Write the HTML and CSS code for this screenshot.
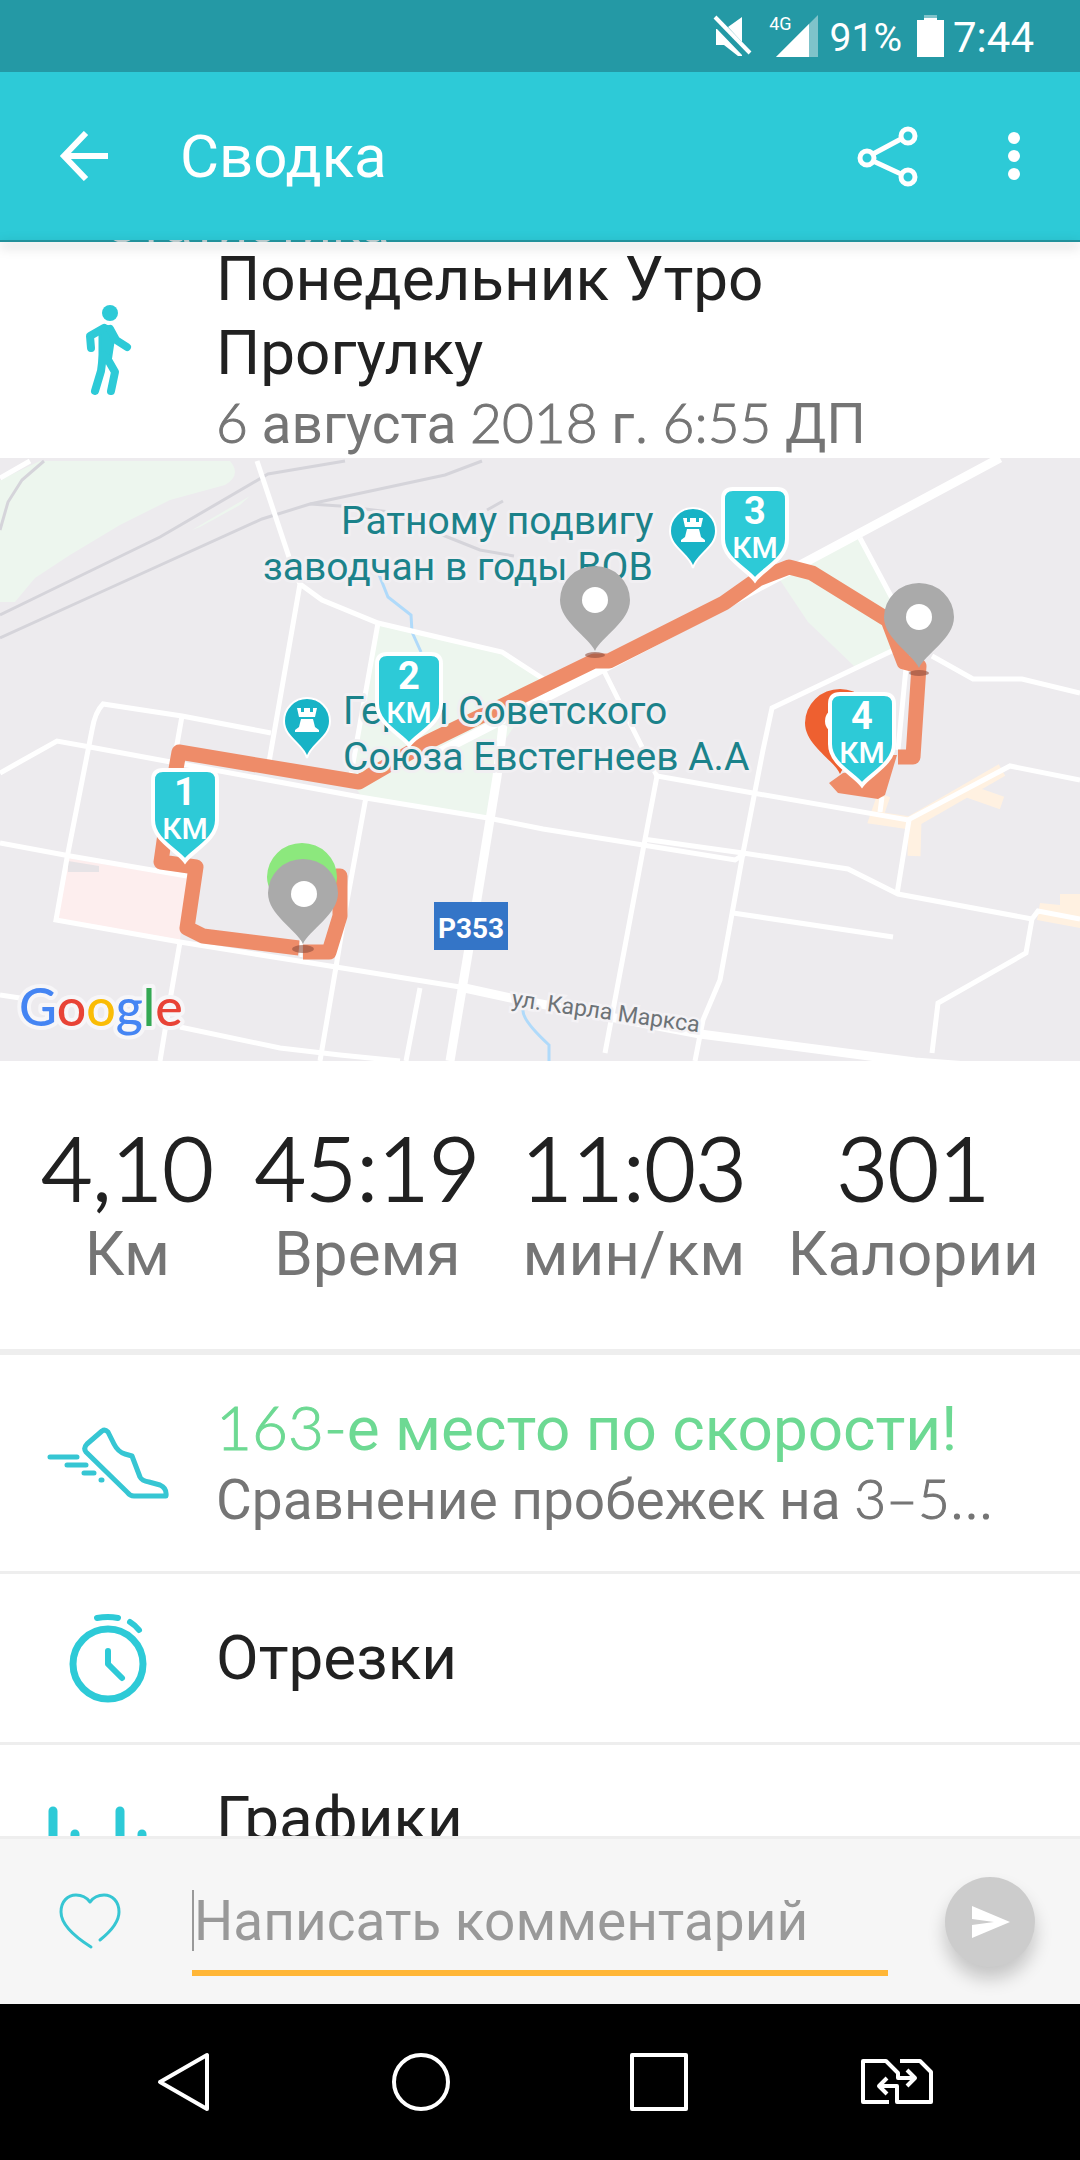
FILE: index.html
```html
<!DOCTYPE html>
<html lang="ru">
<head>
    <meta charset="UTF-8">
    <meta name="viewport" content="width=device-width, initial-scale=1.0">
    <title>Сводка</title>
    <link rel="stylesheet" href="styles.css">
</head>
<body>
    <div class="status-bar">
        <svg class="mute" width="40" height="42" viewBox="716 14 40 42">
            <path d="M719 28V44H727L741 55H745V54L720 28ZM731 26L745 16V41Z" fill="#fff"/>
            <path d="M718 16L753 52" stroke="#fff" stroke-width="4"/>
        </svg>
        <span class="network">4G</span>
        <svg class="signal" width="42" height="42" viewBox="0 0 42 42">
            <path d="M42 0V42H0Z" fill="#7fc3ca"/>
            <path d="M33 9V42H0Z" fill="#fff"/>
        </svg>
        <span class="percent">91%</span>
        <svg class="battery" width="27" height="42" viewBox="0 0 27 42">
            <path d="M7 0H20V5H7Z" fill="#7fc3ca"/>
            <path d="M0 5H7V3H20V5H27V42H0Z" fill="#fff"/>
        </svg>
        <span class="clock">7:44</span>
    </div>

    <header class="app-bar">
        <button class="icon-button" type="button" aria-label="Назад">
            <svg width="50" height="50" viewBox="59 131 50 50" fill="none" stroke="#fff" stroke-width="6">
                <path d="M108 156H65M86 133L64 156L86 179"/>
            </svg>
        </button>
        <h1>Сводка</h1>
        <button class="icon-button" type="button" aria-label="Поделиться">
            <svg width="62" height="62" viewBox="857 125 62 62" fill="none" stroke="#fff" stroke-width="5">
                <circle cx="908" cy="136" r="7"/>
                <circle cx="867" cy="158" r="7"/>
                <circle cx="908" cy="177" r="7"/>
                <path d="M873 154L901 139M873 161L901 174"/>
            </svg>
        </button>
        <button class="icon-button menu" type="button" aria-label="Меню">
            <svg width="14" height="50" viewBox="0 0 14 50" fill="#fff">
                <circle cx="7" cy="7" r="6"/>
                <circle cx="7" cy="25" r="6"/>
                <circle cx="7" cy="43" r="6"/>
            </svg>
        </button>
    </header>
    <div class="tab-edge"><span>Статистика</span></div>

    <main>
        <section class="activity">
            <div class="row-icon">
                <svg width="48" height="92" viewBox="85 304 48 92" fill="none" stroke="#2dcad7" stroke-linecap="round" stroke-linejoin="round">
                    <circle cx="111" cy="313" r="8" fill="#2dcad7" stroke="none"/>
                    <path d="M101 330L106 326L111 327L114 342L111 362H101L101 345Z" fill="#2dcad7" stroke-width="3"/>
                    <path d="M105 328L91 336L92 348" stroke-width="8"/>
                    <path d="M111 329L117 340L128 347" stroke-width="8"/>
                    <path d="M104 355L102 371L96 391M108 358L116 372L112 391" stroke-width="8"/>
                </svg>
            </div>
            <div class="row-text">
                <h2>Понедельник Утро Прогулку</h2>
                <p><span class="num">6</span> августа <span class="num">2018</span> г. <span class="num">6:55</span> ДП</p>
            </div>
        </section>

        <svg class="map" viewBox="0 458 1080 603">
            <defs>
                <path id="pin" d="M0 50C-6 36-35 21-35-1A35 34 0 0 1 35-1C35 21 6 36 0 50Z"/>
                <g id="castle">
                    <path d="M0 37C-3 23-23 17-23 0A23 23 0 0 1 23 0C23 17 3 23 0 37Z" fill="#18b3c6" stroke="#fff" stroke-width="2"/>
                    <path d="M-10-13H-6V-9H-3V-13H3V-9H6V-13H10L8-4H-8ZM-6-2H6L8 6L12 9V11H-12V9L-8 6Z" fill="#fff"/>
                </g>
                <path id="shield" d="M-22 2H22Q32 2 32 12V52C32 72 8 82 0 93C-8 82-32 72-32 52V12Q-32 2-22 2Z"/>
            </defs>

            <!-- parks and blocks -->
            <g fill="#edf6ee">
                <path d="M0 480L40 461H230Q242 475 225 485L170 500L120 525L70 555L35 578L15 602H0Z"/>
                <path d="M192 530L250 496L240 505L200 527Z"/>
                <path d="M378 625L502 652L545 680L505 740L488 817L362 797L350 780Z"/>
                <path d="M808 557L860 538L893 600L897 648L855 667L808 622L780 580Z"/>
            </g>
            <path d="M67 858L187 878L180 940L57 920Z" fill="#fdeeee"/>
            <path d="M68 861L99 866V872H68Z" fill="#e6e3e6"/>
            <path d="M1037 920L1040 903L1060 905V894H1080V928Z" fill="#fff1e1"/>
            <path d="M884 795L876 818L910 823L1002 770M965 790L1002 803M915 820L914 856" fill="none" stroke="#fff1e1" stroke-width="13"/>

            <!-- railways -->
            <g fill="none" stroke="#d5d4da" stroke-width="3">
                <path d="M0 615L45 593L160 537L268 474L345 461"/>
                <path d="M0 638L90 597L262 519L310 504L445 475L482 461"/>
                <path d="M44 461L22 480L8 502L0 530"/>
                <path d="M310 504L340 506L390 512L430 530L480 550L514 556M487 510L503 501"/>
            </g>
            <path d="M378 572L388 597L411 615L412 632L421 652M523 1010Q522 1020 549 1045V1061" fill="none" stroke="#b0dafa" stroke-width="3"/>

            <!-- streets -->
            <g fill="none" stroke="#fff" stroke-width="5">
                <path d="M0 478L30 461M257 461L290 560L300 584L268 768"/>
                <path d="M300 584L322 600L378 623L450 640L502 652L545 680M378 623L350 780"/>
                <path d="M0 773L57 741L90 747L160 760L360 797L488 818L543 829L643 845L735 860L746 853"/>
                <path d="M271 733L182 716L103 704Q95 712 92 730L67 858L56 920L180 942L336 967L460 987"/>
                <path d="M182 716L176 750M0 843L70 856L187 876"/>
                <path d="M366 797L345 912L336 967L320 1061M180 942L170 1000L160 1061"/>
                <path d="M0 995L20 998M180 1027L280 1048L340 1055L400 1061M420 988L406 1061"/>
                <path d="M604 671L642 747L657 776L753 793L908 820L1010 766L1080 780"/>
                <path d="M898 648L772 708L763 750L743 853L720 980L703 1020L695 1061"/>
                <path d="M657 776L643 850L605 1053M643 839L743 853L848 869L898 894L1032 919"/>
                <path d="M733 913L893 937M909 820L897 894M882 797L880 812"/>
                <path d="M1080 919L1038 911L1032 919L1026 953L938 1003L932 1053"/>
                <path d="M860 538L893 600M932 656L973 679L1022 679L1080 693M906 668L898 750"/>
            </g>
            <g fill="none" stroke="#fff" stroke-width="9">
                <path d="M503 725L497 777L470 942L450 1061"/>
                <path d="M460 987L520 1000L700 1034L915 1062L1020 1070"/>
                <path d="M1000 458L860 533L757 588L604 668L420 762"/>
            </g>

            <!-- track -->
            <g fill="none" stroke="#ee8c69" stroke-width="15" stroke-linejoin="round">
                <path d="M336 876H340V916L329 952H303"/>
                <path d="M299 948L203 936L187 928L196 867L161 862L167 820L179 752L359 782L428 742L594 661L609 661L724 603L758 579L789 567L812 573L888 620L904 662L919 666L913 757H898"/>
            </g>
            <path d="M829 783L843 773L862 770L888 755H897L885 795L878 799L838 793Z" fill="#ee8c69"/>
            <path d="M301 940V957" stroke="#fff" stroke-width="3"/>

            <!-- place names -->
            <g class="place">
                <text x="341" y="534">Ратному подвигу</text>
                <text x="263" y="580">заводчан в годы ВОВ</text>
                <text x="343" y="724">Герои Советского</text>
                <text x="343" y="770">Союза Евстегнеев А.А</text>
            </g>
            <use href="#castle" x="693" y="531"/>
            <use href="#castle" x="307" y="721"/>
            <text class="street" transform="translate(511 1006) rotate(8)">ул. Карла Маркса</text>
            <rect x="434" y="902" width="74" height="48" fill="#3475c7"/>
            <text class="road" x="471" y="938">P353</text>

            <!-- start, finish and pauses -->
            <g fill="#8f4d3c" opacity="0.6">
                <ellipse cx="595" cy="655" rx="10" ry="3"/>
                <ellipse cx="919" cy="673" rx="10" ry="3"/>
                <ellipse cx="303" cy="949" rx="11" ry="4"/>
            </g>
            <use href="#pin" x="302" y="878" fill="#8ce87d"/>
            <use href="#pin" x="840" y="724" fill="#ee6030"/>
            <circle cx="838" cy="721" r="13" fill="#fff"/>
            <g fill="#aaa">
                <use href="#pin" x="595" y="601"/>
                <use href="#pin" x="919" y="618"/>
                <use href="#pin" x="303" y="894"/>
            </g>
            <g fill="#fff">
                <circle cx="595" cy="600" r="13"/>
                <circle cx="919" cy="617" r="13"/>
                <circle cx="304" cy="894" r="13"/>
            </g>

            <!-- kilometre marks -->
            <g class="km">
                <g transform="translate(185 768)"><use href="#shield"/><text y="37">1</text><text class="unit" y="71">КМ</text></g>
                <g transform="translate(409 652)"><use href="#shield"/><text y="37">2</text><text class="unit" y="71">КМ</text></g>
                <g transform="translate(755 487)"><use href="#shield"/><text y="37">3</text><text class="unit" y="71">КМ</text></g>
                <g transform="translate(862 692)"><use href="#shield"/><text y="37">4</text><text class="unit" y="71">КМ</text></g>
            </g>

            <text class="google" x="19" y="1026"><tspan fill="#4585f3">G</tspan><tspan fill="#e84336">o</tspan><tspan fill="#fabc05">o</tspan><tspan fill="#4585f3">g</tspan><tspan fill="#34a853">l</tspan><tspan fill="#e84336">e</tspan></text>
        </svg>

        <section class="stats">
            <div class="stat"><span class="value">4,10</span><span class="label">Км</span></div>
            <div class="stat"><span class="value">45:19</span><span class="label">Время</span></div>
            <div class="stat"><span class="value">11:03</span><span class="label">мин/км</span></div>
            <div class="stat"><span class="value">301</span><span class="label">Калории</span></div>
        </section>

        <section class="row">
            <div class="row-icon">
                <svg width="124" height="74" viewBox="46 1426 124 74" fill="none" stroke="#36c6d3" stroke-width="5" stroke-linecap="round" stroke-linejoin="round">
                    <path d="M102 1431Q105 1429 108 1432L114 1444Q118 1452 125 1454L132 1456L140 1477Q142 1481 149 1482L160 1485Q167 1488 166 1496H134Q130 1496 127 1492L86 1452Q83 1448 87 1444Z"/>
                    <path d="M50 1457H77M67 1465H86M84 1473H94M101 1480H102"/>
                </svg>
            </div>
            <div class="row-text">
                <h2 class="rank"><span class="num">163-</span>е место по скорости!</h2>
                <p>Сравнение пробежек на <span class="num">3–5</span>...</p>
            </div>
        </section>

        <section class="row">
            <div class="row-icon">
                <svg width="80" height="92" viewBox="68 1612 80 92" fill="none" stroke="#2dcad7" stroke-width="7" stroke-linecap="round" stroke-linejoin="round">
                    <circle cx="108" cy="1664" r="35"/>
                    <path d="M97 1618Q108 1616 118 1618M130 1622Q135 1625 139 1630M108 1651V1664L122 1678" stroke-width="6"/>
                </svg>
            </div>
            <div class="row-text">
                <h2>Отрезки</h2>
            </div>
        </section>

        <section class="row">
            <div class="row-icon">
                <svg width="120" height="94" viewBox="0 0 120 94" fill="none" stroke="#2dcad7" stroke-width="9" stroke-linecap="round">
                    <path d="M5 5V89M27 28V89M49 50V89M72 5V89M94 28V89M115 50V89"/>
                </svg>
            </div>
            <div class="row-text">
                <h2>Графики</h2>
                <p>Темп, высота</p>
            </div>
        </section>
    </main>

    <form class="comment">
        <button class="icon-button like" type="button" aria-label="Нравится">
            <svg width="62" height="58" viewBox="59 1894 62 58" fill="none" stroke="#36c6d3" stroke-width="3" stroke-linecap="round" stroke-linejoin="round">
                <path d="M91 1948C72 1936 61 1925 61 1913C61 1902 68 1896 76 1896C82 1896 87 1899 90 1903C93 1899 98 1896 104 1896C112 1896 119 1902 119 1913C119 1924 110 1933 100 1941"/>
            </svg>
        </button>
        <div class="field">
            <input type="text" placeholder="Написать комментарий" aria-label="Написать комментарий">
        </div>
        <button class="send" type="submit" aria-label="Отправить">
            <svg width="38" height="32" viewBox="0 0 38 32">
                <path d="M0 0L38 16L0 32V19L22 16L0 13Z" fill="#fff"/>
            </svg>
        </button>
    </form>

    <nav class="nav-bar">
        <button class="icon-button" type="button" aria-label="Назад">
            <svg width="76" height="60" viewBox="145 2052 76 60"><path d="M207 2055V2109L160 2082Z"/></svg>
        </button>
        <button class="icon-button" type="button" aria-label="Домой">
            <svg width="76" height="60" viewBox="383 2052 76 60"><circle cx="421" cy="2082" r="27"/></svg>
        </button>
        <button class="icon-button" type="button" aria-label="Недавние">
            <svg width="76" height="60" viewBox="621 2052 76 60"><path d="M632 2055H686V2109H632Z"/></svg>
        </button>
        <button class="icon-button" type="button" aria-label="Сменить SIM">
            <svg width="76" height="60" viewBox="859 2052 76 60">
                <path d="M889 2102H863V2061H886L898 2073V2078H915M907 2070L915 2078L907 2086"/>
                <path d="M900 2061H920L931 2072V2102H897V2086H879M887 2078L879 2086L887 2094"/>
            </svg>
        </button>
    </nav>
</body>
</html>
```
FILE: styles.css
```css
* {
    box-sizing: border-box;
}

body {
    margin: 0;
    height: 100vh;
    display: flex;
    flex-direction: column;
    background-color: #fff;
    color: #212121;
    font-family: Roboto, "Noto Sans", sans-serif;
    overflow: hidden;
}

h1, h2, p {
    margin: 0;
    font-weight: 400;
}

svg {
    display: block;
    flex: none;
}

.icon-button {
    display: flex;
    padding: 0;
    border: none;
    background: none;
    cursor: pointer;
}

/* Status bar */
.status-bar {
    flex: none;
    display: flex;
    align-items: center;
    justify-content: flex-end;
    height: 72px;
    padding-right: 46px;
    background-color: #2499a5;
    color: #fff;
}

.network {
    align-self: flex-start;
    margin: 12px -16px 0 16px;
    font-size: 18px;
    line-height: 24px;
}

.percent {
    margin: 4px 15px 0 12px;
    font-size: 39px;
}

.clock {
    margin: 3px 0 0 9px;
    font-size: 42px;
}

/* App bar */
.app-bar {
    flex: none;
    display: flex;
    align-items: center;
    height: 168px;
    padding: 0 59px;
    background-color: #2dcad7;
    color: #fff;
}

.app-bar h1 {
    flex: 1;
    margin-left: 71px;
    font-size: 60px;
}

.app-bar .menu {
    margin-left: 88px;
}

.tab-edge {
    flex: none;
    position: relative;
    z-index: 1;
    height: 2px;
    background-color: #21919b;
    box-shadow: 0 4px 12px rgba(0, 0, 0, 0.4);
}

.tab-edge span {
    display: flex;
    align-items: flex-end;
    height: 2px;
    padding-left: 104px;
    overflow: hidden;
    color: #b9c9cb;
    font-size: 53px;
    line-height: 36px;
}

/* Content */
main {
    flex: 1;
    min-height: 0;
    overflow: hidden;
}

.activity, .row {
    display: flex;
    align-items: center;
}

.row {
    min-height: 171px;
    padding: 37px 0;
    border-bottom: 3px solid #eee;
}

.row-icon {
    flex: none;
    display: flex;
    justify-content: center;
    width: 216px;
}

.row-text {
    flex: 1;
    min-width: 0;
}

.row-text h2 {
    max-width: 700px;
    font-size: 62px;
    line-height: 74px;
}

.row-text .rank {
    max-width: none;
    color: #6dd993;
}

.row-text p {
    color: #757575;
    font-size: 55px;
    line-height: 68px;
}

.num {
    font-family: Lato, sans-serif;
    font-weight: 300;
    line-height: 0;
    -webkit-text-stroke: 1px;
}

/* Map */
.map {
    width: 100%;
    background-color: #edebee;
}

.place {
    fill: #1b828a;
    stroke: #f1eff2;
    stroke-width: 6px;
    stroke-linejoin: round;
    paint-order: stroke;
    font-size: 39px;
}

.street {
    fill: #6d7377;
    stroke: #f4f2f5;
    stroke-width: 5px;
    paint-order: stroke;
    font-size: 23px;
}

.road {
    fill: #fff;
    font-size: 28px;
    font-weight: 700;
    text-anchor: middle;
}

.km use {
    fill: #2dcad7;
    stroke: #fff;
    stroke-width: 4px;
}

.km text {
    fill: #fff;
    font-size: 38px;
    font-weight: 700;
    text-anchor: middle;
}

.km .unit {
    font-size: 30px;
    font-weight: 500;
}

.google {
    stroke: #f7f6f8;
    stroke-width: 8px;
    stroke-linejoin: round;
    paint-order: stroke;
    font-family: Lato, sans-serif;
    font-size: 52px;
    font-weight: 500;
}

/* Stats */
.stats {
    display: flex;
    justify-content: space-evenly;
    padding: 56px 0 58px;
    border-bottom: 6px solid #eee;
}

.stat {
    display: flex;
    flex-direction: column;
    align-items: center;
}

.value {
    font-family: Lato, sans-serif;
    font-size: 88px;
    font-weight: 300;
    line-height: 100px;
    -webkit-text-stroke: 2px;
}

.label {
    color: #757575;
    font-size: 62px;
    line-height: 74px;
}

/* Comment form */
.comment {
    flex: none;
    display: flex;
    align-items: center;
    height: 168px;
    padding: 0 45px 0 59px;
    border-top: 3px solid #eee;
    background-color: #f6f6f6;
}

.field {
    flex: 1;
    margin: 23px 57px 0 71px;
    padding-bottom: 19px;
    border-bottom: 6px solid #ffb637;
}

.field input {
    display: block;
    width: 100%;
    height: 61px;
    padding: 0;
    border: none;
    border-left: 2px solid #999;
    outline: none;
    background: none;
    font-family: inherit;
    font-size: 55px;
}

.field input::placeholder {
    color: #999;
}

.send {
    flex: none;
    display: flex;
    align-items: center;
    justify-content: center;
    width: 90px;
    height: 90px;
    padding: 0 0 0 2px;
    border: none;
    border-radius: 50%;
    background-color: #ccc;
    box-shadow: 0 12px 18px rgba(0, 0, 0, 0.2);
}

/* Navigation bar */
.nav-bar {
    flex: none;
    display: flex;
    align-items: center;
    justify-content: space-between;
    height: 156px;
    padding: 0 145px;
    background-color: #000;
}

.nav-bar svg {
    fill: none;
    stroke: #fff;
    stroke-width: 4px;
    stroke-linejoin: round;
}
```
